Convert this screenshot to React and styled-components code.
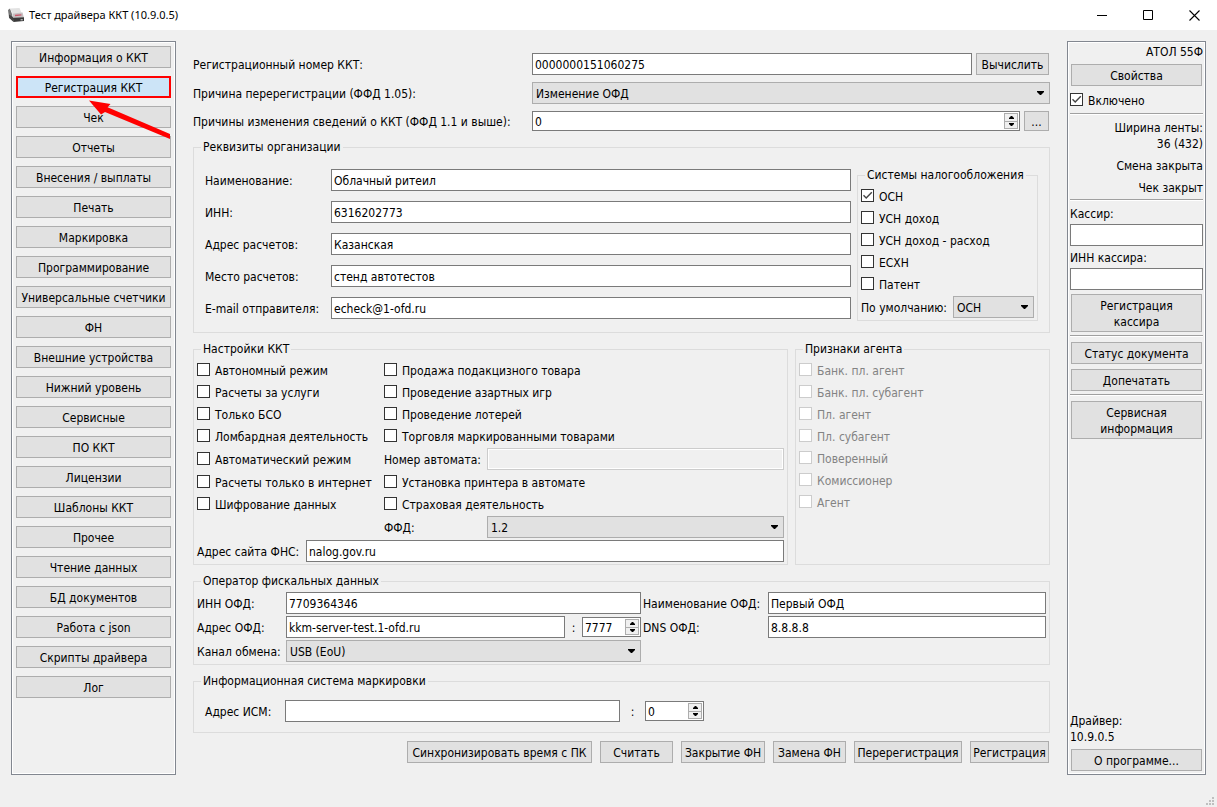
import React, { useState } from "react";
import styled, { createGlobalStyle, css } from "styled-components";

const GlobalStyle = createGlobalStyle`
    * {
        box-sizing: border-box;
    }
    body {
        margin: 0;
        background: #f0f0f0;
    }
    body, button, input, select {
        font-family: "DejaVu Sans Condensed", "DejaVu Sans", Tahoma, sans-serif;
        font-size: 12px;
        line-height: 16px;
        color: #000;
    }
    label {
        padding-top: 2px;
    }
`;

const menu = [
    'Информация о ККТ', 'Регистрация ККТ', 'Чек', 'Отчеты', 'Внесения / выплаты', 'Печать',
    'Маркировка', 'Программирование', 'Универсальные счетчики', 'ФН', 'Внешние устройства',
    'Нижний уровень', 'Сервисные', 'ПО ККТ', 'Лицензии', 'Шаблоны ККТ', 'Прочее',
    'Чтение данных', 'БД документов', 'Работа с json', 'Скрипты драйвера', 'Лог',
];

const orgFields = [
    { id: 'orgName', label: 'Наименование:', value: 'Облачный ритеил' },
    { id: 'orgInn', label: 'ИНН:', value: '6316202773' },
    { id: 'orgAddress', label: 'Адрес расчетов:', value: 'Казанская' },
    { id: 'orgPlace', label: 'Место расчетов:', value: 'стенд автотестов' },
    { id: 'orgEmail', label: 'E-mail отправителя:', value: 'echeck@1-ofd.ru' },
];

const taxes = ['ОСН', 'УСН доход', 'УСН доход - расход', 'ЕСХН', 'Патент'];

const agents = [
    'Банк. пл. агент', 'Банк. пл. субагент', 'Пл. агент', 'Пл. субагент',
    'Поверенный', 'Комиссионер', 'Агент',
];

const actions = [
    { label: 'Синхронизировать время с ПК', width: 185 },
    { label: 'Считать', width: 73 },
    { label: 'Закрытие ФН', width: 84 },
    { label: 'Замена ФН', width: 73 },
    { label: 'Перерегистрация', width: 108 },
    { label: 'Регистрация', width: 79 },
];

const Check = ({ label, checked = false, disabled = false }) => {
    const [on, setOn] = useState(checked);
    return (
        <CheckLabel $disabled={disabled}>
            <CheckBox>
                <CheckInput type="checkbox" checked={on} disabled={disabled} onChange={(e) => setOn(e.target.checked)} />
                {on &&
                    <Tick viewBox="0 0 13 13" width="13" height="13" aria-hidden="true">
                        <path d="M2.5 6.3 L5.2 9 L10.8 3.2" fill="none" stroke="#444" strokeWidth="1.4" />
                    </Tick>
                }
            </CheckBox>
            {label}
        </CheckLabel>
    );
};

const Select = ({ id, value }) => (
    <SelectWrap>
        <SelectField id={id} defaultValue={value}>
            <option>{value}</option>
        </SelectField>
        <SelectArrow viewBox="0 0 7 4" width="7" height="4" aria-hidden="true">
            <path d="M0 0 H7 V1 L4 4 H3 L0 1 Z" fill="#000" />
        </SelectArrow>
    </SelectWrap>
);

const Spin = ({ id, value, label, width }) => {
    const [num, setNum] = useState(value);
    return (
        <SpinWrap $width={width}>
            <SpinInput id={id} type="number" aria-label={label} value={num} onChange={(e) => setNum(Number(e.target.value))} />
            <SpinButtons>
                <SpinButton type="button" aria-label="Больше" onClick={() => setNum(num + 1)}>
                    <svg viewBox="0 0 5 3" width="5" height="3"><path d="M2 0 H3 L5 2 V3 H0 V2 Z" /></svg>
                </SpinButton>
                <SpinButton type="button" aria-label="Меньше" onClick={() => setNum(num - 1)}>
                    <svg viewBox="0 0 5 3" width="5" height="3"><path d="M0 0 H5 V1 L3 3 H2 L0 1 Z" /></svg>
                </SpinButton>
            </SpinButtons>
        </SpinWrap>
    );
};

const PrinterIcon = () => (
    <svg viewBox="0 0 16 14" width="16" height="14" aria-hidden="true">
        <path d="M0 2 L2 0.5 L4 6 L5 13.5 L1 9.5 Z" fill="#777" />
        <path d="M1 6.5 L5 9 L5.5 13.8 L1.2 10 Z" fill="#444" />
        <path d="M2 0.4 L11.5 0 L13.6 5 L4.6 5.6 Z" fill="#e2e2e2" />
        <path d="M4.4 5.6 L14.6 4.6 L15.8 9.4 L5 9.8 Z" fill="#c6c0c1" />
        <path d="M7 7.5 L13.4 6.8" stroke="#c8566a" strokeWidth="1.3" />
        <path d="M4.8 9.8 L16 9.2 V13 L5.4 14 Z" fill="#3a3a3a" />
        <path d="M12.6 11.8 H14.8" stroke="#ddd" strokeWidth="1" />
    </svg>
);

const Sidebar = () => {
    const [active, setActive] = useState(1);
    return (
        <Menu>
            {menu.map((item, i) => (
                <MenuButton key={item} type="button" $active={i === active} onClick={() => setActive(i)}>
                    {item}
                </MenuButton>
            ))}
            <Pointer viewBox="0 0 81 40" width="81" height="40" aria-hidden="true">
                <path d="M0 0.5 L21.5 4 L18.6 7.2 L82 34.4 V39.4 L16 12 L12 14.5 Z" fill="#f00" />
            </Pointer>
        </Menu>
    );
};

const Organization = () => (
    <Group>
        <Legend>Реквизиты организации</Legend>
        <OrgBody>
            <OrgFields>
                {orgFields.map((el) => (
                    <React.Fragment key={el.id}>
                        <label htmlFor={el.id}>{el.label}</label>
                        <TextInput id={el.id} defaultValue={el.value} />
                    </React.Fragment>
                ))}
            </OrgFields>
            <Group>
                <Legend>Системы налогообложения</Legend>
                <CheckList>
                    {taxes.map((el) => <Check key={el} label={el} checked={el === 'ОСН'} />)}
                    <TaxDefault>
                        <label htmlFor="taxDefault">По умолчанию:</label>
                        <Select id="taxDefault" value="ОСН" />
                    </TaxDefault>
                </CheckList>
            </Group>
        </OrgBody>
    </Group>
);

const Settings = () => (
    <Group>
        <Legend>Настройки ККТ</Legend>
        <SettingsBody>
            <Check label="Автономный режим" />
            <Wide><Check label="Продажа подакцизного товара" /></Wide>
            <Check label="Расчеты за услуги" />
            <Wide><Check label="Проведение азартных игр" /></Wide>
            <Check label="Только БСО" />
            <Wide><Check label="Проведение лотерей" /></Wide>
            <Check label="Ломбардная деятельность" />
            <Wide><Check label="Торговля маркированными товарами" /></Wide>
            <Check label="Автоматический режим" />
            <label htmlFor="machine">Номер автомата:</label>
            <TextInput id="machine" disabled />
            <Check label="Расчеты только в интернет" />
            <Wide><Check label="Установка принтера в автомате" /></Wide>
            <Check label="Шифрование данных" />
            <Wide><Check label="Страховая деятельность" /></Wide>
            <span />
            <label htmlFor="ffd">ФФД:</label>
            <Select id="ffd" value="1.2" />
            <SiteRow>
                <label htmlFor="site">Адрес сайта ФНС:</label>
                <TextInput id="site" defaultValue="nalog.gov.ru" />
            </SiteRow>
        </SettingsBody>
    </Group>
);

const Operator = () => (
    <Group>
        <Legend>Оператор фискальных данных</Legend>
        <OperatorBody>
            <label htmlFor="ofdInn">ИНН ОФД:</label>
            <TextInput id="ofdInn" defaultValue="7709364346" />
            <NextLabel htmlFor="ofdName">Наименование ОФД:</NextLabel>
            <TextInput id="ofdName" defaultValue="Первый ОФД" />
            <label htmlFor="ofdHost">Адрес ОФД:</label>
            <HostRow>
                <TextInput id="ofdHost" defaultValue="kkm-server-test.1-ofd.ru" />
                <Colon>:</Colon>
                <Spin value={7777} label="Порт ОФД" width="59px" />
            </HostRow>
            <NextLabel htmlFor="ofdDns">DNS ОФД:</NextLabel>
            <TextInput id="ofdDns" defaultValue="8.8.8.8" />
            <label htmlFor="channel">Канал обмена:</label>
            <Select id="channel" value="USB (EoU)" />
        </OperatorBody>
    </Group>
);

const DevicePanel = () => (
    <Device>
        <RightText>АТОЛ 55Ф</RightText>
        <PanelButton type="button">Свойства</PanelButton>
        <Check label="Включено" checked />
        <Divider />
        <RightText>Ширина ленты:<br />36 (432)</RightText>
        <Status>Смена закрыта</Status>
        <Status>Чек закрыт</Status>
        <Divider />
        <PanelField>
            <PanelLabel htmlFor="cashier">Кассир:</PanelLabel>
            <TextInput id="cashier" />
        </PanelField>
        <PanelField>
            <PanelLabel htmlFor="cashierInn">ИНН кассира:</PanelLabel>
            <TextInput id="cashierInn" />
        </PanelField>
        <PanelButton type="button" $tall>Регистрация<br />кассира</PanelButton>
        <Divider />
        <Stack>
            <PanelButton type="button">Статус документа</PanelButton>
            <PanelButton type="button">Допечатать</PanelButton>
        </Stack>
        <Divider />
        <PanelButton type="button" $tall>Сервисная<br />информация</PanelButton>
        <Version>Драйвер:<br />10.9.0.5</Version>
        <PanelButton type="button">О программе...</PanelButton>
    </Device>
);

const App = () => (
    <Window>
        <GlobalStyle />
        <TitleBar>
            <PrinterIcon />
            <Title>Тест драйвера ККТ (10.9.0.5)</Title>
            <WindowButton type="button" aria-label="Свернуть">
                <svg viewBox="0 0 11 11" width="11" height="11"><path d="M0 5.5 H10" stroke="#000" /></svg>
            </WindowButton>
            <WindowButton type="button" aria-label="Развернуть">
                <svg viewBox="0 0 11 11" width="11" height="11"><path d="M0.5 0.5 H9.5 V9.5 H0.5 Z" fill="none" stroke="#000" /></svg>
            </WindowButton>
            <WindowButton type="button" aria-label="Закрыть">
                <svg viewBox="0 0 11 11" width="11" height="11"><path d="M0.5 0.5 L10.5 10.5 M10.5 0.5 L0.5 10.5" stroke="#000" strokeWidth="1.1" /></svg>
            </WindowButton>
        </TitleBar>
        <Body>
            <Sidebar />
            <Main>
                <TopForm>
                    <label htmlFor="regNumber">Регистрационный номер ККТ:</label>
                    <TopRow>
                        <TextInput id="regNumber" defaultValue="0000000151060275" />
                        <Button type="button" $width="73px">Вычислить</Button>
                    </TopRow>
                    <label htmlFor="reason">Причина перерегистрации (ФФД 1.05):</label>
                    <Select id="reason" value="Изменение ОФД" />
                    <label htmlFor="changes">Причины изменения сведений о ККТ (ФФД 1.1 и выше):</label>
                    <TopRow>
                        <Spin id="changes" value={0} />
                        <Button type="button" $width="25px" $small>...</Button>
                    </TopRow>
                </TopForm>
                <Organization />
                <Columns>
                    <Settings />
                    <Group>
                        <Legend>Признаки агента</Legend>
                        <CheckList>
                            {agents.map((el) => <Check key={el} label={el} disabled />)}
                        </CheckList>
                    </Group>
                </Columns>
                <Operator />
                <Group>
                    <Legend>Информационная система маркировки</Legend>
                    <MarkingBody>
                        <label htmlFor="ism">Адрес ИСМ:</label>
                        <TextInput id="ism" />
                        <Colon $wide>:</Colon>
                        <Spin value={0} label="Порт ИСМ" width="59px" />
                    </MarkingBody>
                </Group>
                <Actions>
                    {actions.map((el) => (
                        <Button key={el.label} type="button" $width={`${el.width}px`}>{el.label}</Button>
                    ))}
                </Actions>
            </Main>
            <DevicePanel />
        </Body>
        <Grip viewBox="0 0 8 8" width="8" height="8" aria-hidden="true">
            <path d="M6 0h2v2h-2z M3 3h2v2h-2z M6 3h2v2h-2z M0 6h2v2h-2z M3 6h2v2h-2z M6 6h2v2h-2z" fill="#bfbfbf" />
        </Grip>
    </Window>
);

export default App;

const Window = styled.div`
    position: relative;
    display: flex;
    flex-direction: column;
    min-height: 100vh;
`;

const TitleBar = styled.header`
    display: flex;
    align-items: center;
    height: 30px;
    padding-left: 8px;
    background: #fff;
`;

const Title = styled.h1`
    flex: 1;
    margin: 0 0 0 5px;
    font-family: "Noto Sans", "Segoe UI", sans-serif;
    font-size: 11px;
    font-weight: 400;
`;

const WindowButton = styled.button`
    display: flex;
    align-items: center;
    justify-content: center;
    width: 46px;
    height: 30px;
    padding: 0;
    border: 0;
    background: none;
`;

const Body = styled.div`
    flex: 1;
    display: grid;
    grid-template-columns: 165px minmax(0, 1fr) 139px;
    gap: 17px;
    padding: 11px 11px 32px;
`;

const panel = css`
    display: flex;
    flex-direction: column;
    border: 1px solid #828790;
    box-shadow: inset 0 0 0 1px #fff;
`;

const Menu = styled.nav`
    ${panel}
    position: relative;
    gap: 8px;
    padding: 4px;
`;

const Button = styled.button`
    flex: none;
    width: ${({ $width }) => $width || 'auto'};
    height: ${({ $small, $tall }) => $small ? '20px' : $tall ? '38px' : '22px'};
    padding: 2px 0 0;
    border: 1px solid #adadad;
    background: #e1e1e1;
    white-space: nowrap;
`;

const MenuButton = styled(Button)`
    ${({ $active }) => $active && css`
        border: 2px solid #f00;
        background: #cce4f7;
    `}
`;

const Pointer = styled.svg`
    position: absolute;
    top: 58px;
    left: 77px;
    pointer-events: none;
`;

const Main = styled.main`
    display: flex;
    flex-direction: column;
    gap: 8px;
    padding-top: 12px;
`;

const TopForm = styled.div`
    display: grid;
    grid-template-columns: 339px minmax(0, 1fr);
    row-gap: 7px;
    align-items: center;
`;

const TopRow = styled.div`
    display: flex;
    gap: 4px;
    padding-right: 1px;
`;

const Group = styled.fieldset`
    min-width: 0;
    margin: 0;
    padding: 0;
    border: 1px solid #dcdcdc;
`;

const Legend = styled.legend`
    margin-left: 7px;
    padding: 0 2px;
`;

const OrgBody = styled.div`
    display: grid;
    grid-template-columns: minmax(0, 1fr) 181px;
    gap: 6px;
    padding: 12px 11px 11px;
`;

const OrgFields = styled.div`
    display: grid;
    grid-template-columns: 126px minmax(0, 1fr);
    gap: 10px 0;
    align-items: center;
    align-content: start;
    padding-top: 2px;
`;

const CheckList = styled.div`
    padding: 2px 3px;
`;

const TaxDefault = styled.div`
    display: grid;
    grid-template-columns: 92px 1fr;
    align-items: center;
    padding-top: 1px;
    white-space: nowrap;
`;

const CheckLabel = styled.label`
    display: flex;
    align-items: flex-start;
    gap: 5px;
    height: 22px;
    padding-top: 4px;
    white-space: nowrap;
    color: ${({ $disabled }) => $disabled ? '#838383' : '#000'};
`;

const CheckBox = styled.span`
    position: relative;
    width: 13px;
    height: 13px;
`;

const CheckInput = styled.input`
    appearance: none;
    display: block;
    width: 13px;
    height: 13px;
    margin: 0;
    border: 1px solid #333;
    background: #fff;

    &:disabled {
        border-color: #ccc;
    }
`;

const Tick = styled.svg`
    position: absolute;
    inset: 0;
    pointer-events: none;
`;

const TextInput = styled.input`
    flex: 1;
    width: 100%;
    min-width: 0;
    height: 22px;
    padding: 2px 2px 0;
    border: 1px solid #7a7a7a;
    border-radius: 0;
    background: #fff;

    &:disabled {
        border-color: #ccc;
        background: #f0f0f0;
        box-shadow: inset 0 0 0 1px #fff;
    }
`;

const SelectWrap = styled.div`
    position: relative;
    min-width: 0;
`;

const SelectField = styled.select`
    appearance: none;
    display: block;
    width: 100%;
    height: 22px;
    padding: 2px 16px 0 3px;
    border: 1px solid #adadad;
    border-radius: 0;
    background: #e1e1e1;
`;

const SelectArrow = styled.svg`
    position: absolute;
    top: 9px;
    right: 6px;
    pointer-events: none;
`;

const SpinWrap = styled.div`
    display: flex;
    flex: ${({ $width }) => $width ? 'none' : '1'};
    width: ${({ $width }) => $width || 'auto'};
    height: 20px;
    padding: 1px;
    border: 1px solid #7a7a7a;
    background: #fff;
`;

const SpinInput = styled.input`
    appearance: textfield;
    flex: 1;
    width: 100%;
    min-width: 0;
    padding: 2px 1px 0;
    border: 0;
    outline: 0;
    background: none;

    &::-webkit-inner-spin-button {
        display: none;
    }
`;

const SpinButtons = styled.div`
    display: flex;
    flex-direction: column;
    width: 14px;
`;

const SpinButton = styled.button`
    display: flex;
    flex: 1;
    align-items: center;
    justify-content: center;
    min-height: 0;
    padding: 0;
    border: 1px solid #adadad;
    background: #f0f0f0;

    & + & {
        border-top: 0;
    }
`;

const Columns = styled.div`
    display: grid;
    grid-template-columns: minmax(0, 7fr) minmax(0, 3fr);
    gap: 7px;
`;

const SettingsBody = styled.div`
    display: grid;
    grid-template-columns: 187px 103px minmax(0, 1fr);
    grid-template-rows: repeat(4, 22px) 24px 22px 22px 24px 24px;
    align-items: center;
    padding: 2px 3px 1px;
    white-space: nowrap;
`;

const Wide = styled.div`
    grid-column: span 2;
`;

const SiteRow = styled.div`
    display: grid;
    grid-column: 1 / -1;
    grid-template-columns: 109px minmax(0, 1fr);
    align-items: center;
`;

const OperatorBody = styled.div`
    display: grid;
    grid-template-columns: 89px minmax(0, 355fr) 127px minmax(0, 278fr);
    row-gap: 2px;
    align-items: center;
    padding: 3px 3px 2px;
    white-space: nowrap;
`;

const NextLabel = styled.label`
    padding-left: 2px;
`;

const HostRow = styled.div`
    display: flex;
    align-items: center;
`;

const Colon = styled.span`
    width: ${({ $wide }) => $wide ? '25px' : '17px'};
    padding-top: 2px;
    text-align: center;
`;

const MarkingBody = styled.div`
    display: grid;
    grid-template-columns: 80px 335px 25px 59px;
    align-items: center;
    padding: 11px 11px 10px;
`;

const Actions = styled.div`
    display: flex;
    justify-content: flex-end;
    gap: 8px;
    padding-right: 1px;
`;

const Device = styled.aside`
    ${panel}
    gap: 4px;
    padding: 2px 2px 3px;

    ${CheckLabel} {
        height: 20px;
        padding-top: 3px;
    }
`;

const RightText = styled.div`
    text-align: right;
`;

const Status = styled(RightText)`
    margin-top: 2px;
`;

const PanelButton = styled(Button)`
    margin: 0 1px;
`;

const Stack = styled.div`
    display: flex;
    flex-direction: column;
    gap: 5px;
`;

const Divider = styled.hr`
    width: 100%;
    height: 2px;
    margin: -1px 0 1px;
    border: 0;
    border-top: 1px solid #a0a0a0;
    background: #fff;
`;

const PanelField = styled.div`
    display: grid;
    gap: 2px;
`;

const PanelLabel = styled.label`
    padding-top: 0;
`;

const Version = styled.div`
    margin-top: auto;
`;

const Grip = styled.svg`
    position: absolute;
    right: 3px;
    bottom: 2px;
`;
